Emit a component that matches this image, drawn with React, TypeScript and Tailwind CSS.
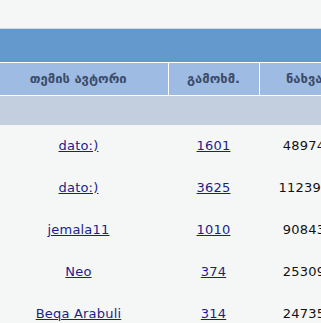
import React from 'react';

const rows = [
  { author: 'dato:)', replies: '1601', views: '48974' },
  { author: 'dato:)', replies: '3625', views: '112392' },
  { author: 'jemala11', replies: '1010', views: '90843' },
  { author: 'Neo', replies: '374', views: '25309' },
  { author: 'Beqa Arabuli', replies: '314', views: '24735' },
];

export default function App() {
  return (
    <div className="w-[321px] h-[323px] overflow-hidden bg-[#f5f7f7] font-['DejaVu_Sans',sans-serif] text-[13px]">
      <div className="h-[28px]" />
      {/* title bar */}
      <div className="h-[34px] border-t border-[#d3d9e0] bg-[#6399cc]" />
      <table className="table-fixed border-collapse w-[349px]">
        <colgroup>
          <col className="w-[168px]" />
          <col className="w-[91px]" />
          <col className="w-[90px]" />
        </colgroup>
        <thead>
          <tr className="h-[33px] bg-[#9ebbe3] text-[#3b4b69]">
            <th className="border-y border-white pr-[11px] text-center font-bold">თემის ავტორი</th>
            <th className="border border-white text-center font-bold">გამოხმ.</th>
            <th className="border-y border-l border-white text-center font-bold">ნახვა</th>
          </tr>
          <tr className="h-[29px] bg-[#c3cedf]">
            <th colSpan={3} />
          </tr>
        </thead>
        <tbody className="tracking-[0.2px]">
          {rows.map((r, i) => (
            <tr key={i} className="h-[42px]">
              <td className="pr-[11px] text-center">
                <a href="#" className="text-[#1b1d8c] underline">{r.author}</a>
              </td>
              <td className="text-center">
                <a href="#" className="text-[#1b1d8c] underline">{r.replies}</a>
              </td>
              <td className="text-center text-[#111]">{r.views}</td>
            </tr>
          ))}
        </tbody>
      </table>
    </div>
  );
}
